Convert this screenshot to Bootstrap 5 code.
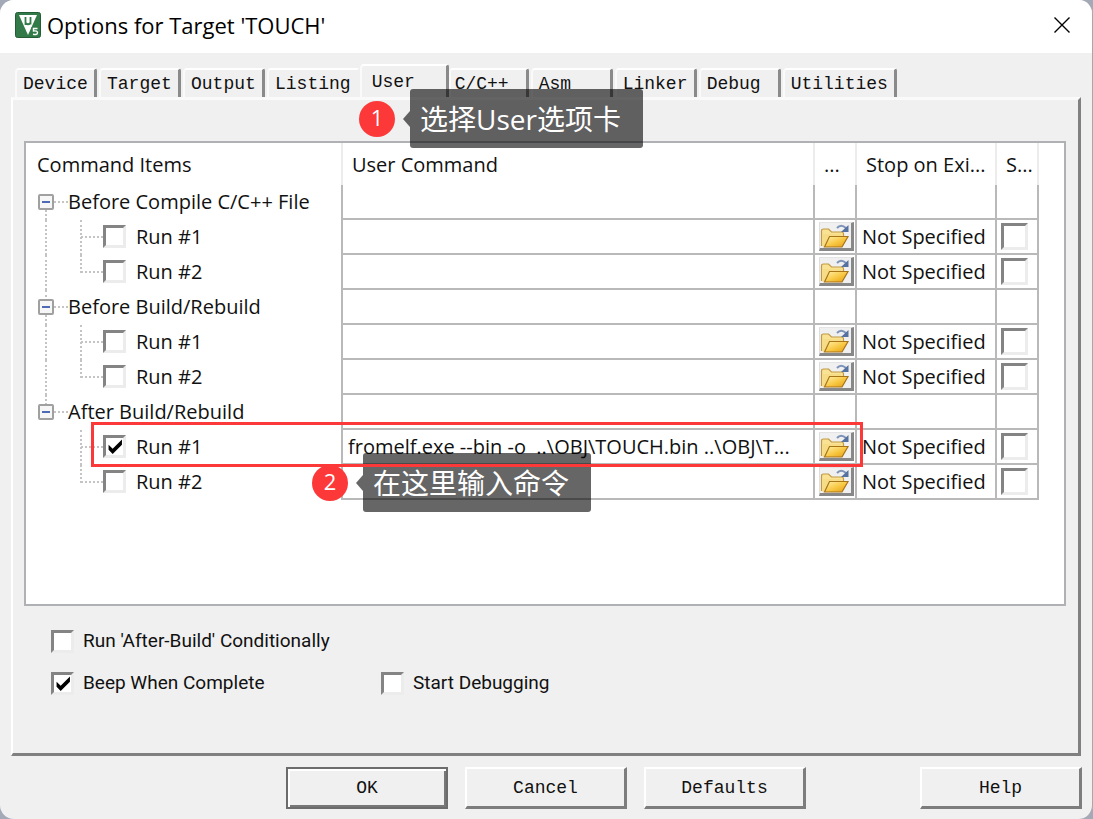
<!DOCTYPE html>
<html lang="en">
<head>
<meta charset="utf-8">
<meta name="viewport" content="width=device-width, initial-scale=1">
<title>Options for Target 'TOUCH'</title>
<link rel="stylesheet" href="https://cdn.jsdelivr.net/npm/bootstrap@5.3.0/dist/css/bootstrap.min.css">
<style>
  :root { --face: #f0f0f0; --grid: #b9b9b9; --red: #fc3838; }
  body { background: #a4a9b8; color: #111; font-family: "Open Sans", "Noto Sans CJK SC", sans-serif; font-size: 20px; line-height: 28px; }
  .dialog-win { background: var(--face); border-right: 1px solid #a8a8a8; border-radius: 14px; overflow: hidden; }
  .title-bar { background: #fff; height: 53px; padding: 0 20px 3px 15px; color: #000; }
  .title-bar h1 { font-size: 22px; line-height: 28px; padding-left: 6px; }
  .close-x { width: 20px; height: 20px; }
  .simsun, .tab-item { font-family: "Liberation Mono", monospace; font-size: 18px; line-height: 24px; color: #111; }

  .tab-strip { padding: 12px 0 0 15px; height: 44px; }
  .tab-item { height: 29px; min-width: 82px; margin-right: 2px; padding: 2px 6px; text-align: left; background: var(--face);
    border: 2px solid; border-color: #fff #8a8a8a transparent #fafafa; border-width: 2px 3px 0 2px; border-radius: 4px 3px 0 0; }
  .tab-item.wide-tab { min-width: 90px; border-right-color: transparent; margin-right: 0; }
  .tab-item.active { position: relative; z-index: 1; height: 33px; min-width: 89px; margin-right: 0; padding-left: 10px; }
  .tab-item.active + .tab-item { min-width: 80px; padding-left: 4px; }

  .tab-page { margin: 0 11px; padding: 41px 12px 0 11px; border: solid; border-width: 3px 3px 3px 2px; border-color: #fafafa #808080 #808080 #fff; }
  .list-box { background: #fff; border: 2px solid #b0b1b5; padding-right: 25px; }

  .cmd-table { table-layout: fixed; border-collapse: separate; border-spacing: 0; }
  .cmd-table th { height: 42px; padding: 2px 0 0 9px; font-weight: 400; border-right: 2px solid #ececec; white-space: nowrap; }
  .cmd-table th:first-child { padding-left: 11px; }
  .cmd-table td { height: 35px; padding: 0 0 0 5px; border-right: 2px solid var(--grid); border-bottom: 2px solid var(--grid); white-space: nowrap; }
  .cmd-table td:first-child { position: relative; padding: 0; border-bottom: 0; }
  .cmd-table td:last-child, .cmd-table td:nth-child(3) { padding-left: 4px; }
  .c-items { width: 317px; } .c-btn { width: 42px; } .c-stop { width: 140px; }

  .group-cell { padding: 0 0 2px 12px; height: 35px; }
  .twig { width: 14px; border-top: 2px dotted #c4c4c4; }
  .expander { position: relative; z-index: 1; width: 16px; height: 16px; padding: 0; border: 2px solid #a0a0a0; border-radius: 2px; background: #f6f6f6; }
  .expander::after { content: ""; display: block; height: 2px; margin: 0 2px; background: #4d6ab5; }
  .trunk::before { content: ""; position: absolute; left: 19px; top: 0; bottom: 0; border-left: 2px dotted #c4c4c4; }
  .trunk-first::before { top: 50%; }
  .trunk-last::before { bottom: 50%; }
  .run-cell { height: 35px; padding: 0 0 2px 55px; }
  .run-cell::before { content: ""; position: absolute; left: 54px; top: 0; bottom: 0; border-left: 2px dotted #c4c4c4; }
  .run-cell.last-run::before { bottom: 50%; }
  .run-cell .twig { width: 22px; }
  .run-cell label { padding-left: 10px; }

  .sunk { appearance: none; flex: none; width: 23px; height: 23px; margin: 0; background: #fff center / 18px 18px no-repeat; border: 3px solid; border-color: #848484 #ececec #ececec #848484; }
  .sunk:checked { background-image: url("data:image/svg+xml,%3Csvg xmlns='http://www.w3.org/2000/svg' viewBox='0 0 18 18'%3E%3Cpath d='M3 7v5l4 4 9-9V2L7 11z'/%3E%3C/svg%3E"); }
  .sunk-lg { width: 27px; height: 27px; display: block; }
  .cmd-input { border: 0; outline: 0; padding: 0; height: 28px; background: transparent; color: #111; display: block; }
  .browse { display: block; width: 35px; height: 29px; padding: 0; background: #f0f0f0; border: solid; border-width: 1px 3px 3px 1px; border-color: #e4e4e4 #888 #888 #ddd; }
  .browse svg { display: block; }

  .run-mark { position: absolute; left: 65px; right: 201px; top: 279px; height: 45px; border: 3px solid var(--red); z-index: 3; pointer-events: none; }
  .note { position: absolute; z-index: 2; color: #fff; }
  .note-user { left: 346px; top: -11px; }
  .note-cmd { left: 286px; top: 310px; }
  .note-num { width: 36px; height: 36px; border-radius: 50%; background: var(--red); font-size: 22px; padding-bottom: 3px; }
  .note-arrow { width: 0; height: 0; margin-left: 8px; border: solid transparent; border-width: 8px 7px 8px 0; border-right-color: rgba(0,0,0,.6); }
  .note-text { height: 59px; padding: 0 22px 0 10px; border-radius: 3px; background: rgba(0,0,0,.6); font-size: 28px; line-height: 60px; white-space: nowrap; }

  .options { height: 147px; padding: 21px 0 0 27px; font-family: "Roboto", sans-serif; font-size: 19px; }
  .options .opt-row { height: 28px; margin-bottom: 14px; }
  .options label { padding-left: 9px; }
  .opt-col { width: 330px; }

  .foot { padding: 11px 10px 10px; gap: 17px; }
  .push-btn { width: 162px; height: 42px; padding: 0; background: var(--face); border: solid; border-width: 2px 3px 3px 2px; border-color: #fff #7d7d7d #7d7d7d #fff; }
  .push-btn.is-default { border: 2px solid #6c6c6c; box-shadow: inset 2px 2px #fff, inset -2px -2px #777; }
  .help-gap { margin-left: 97px; }
</style>
</head>
<body>
<svg width="0" height="0" class="position-absolute" aria-hidden="true">
  <defs>
    <linearGradient id="gf" x1="0" y1="0" x2="1" y2="1"><stop offset="0" stop-color="#fff2ac"/><stop offset=".55" stop-color="#f8c640"/><stop offset="1" stop-color="#e39a12"/></linearGradient>
    <symbol id="folder" viewBox="0 0 31 25">
      <path d="M1.500 23V8q0-2 2-2h5l3 3h10q2 0 2 2v3" fill="#f9e294" stroke="#c29a45" stroke-width="1.200"/>
      <path d="M2 23V11h19v3H9L4 24z" fill="#f7dc88"/>
      <path d="M9.500 13.500H28L22 24H4.500z" fill="url(#gf)" stroke="#a87418" stroke-width="1.200"/>
      <path d="M17 5q4-4.500 9 0" fill="none" stroke="#7d93b8" stroke-width="2"/>
      <path d="M28.500 2v7H21z" fill="#54719f"/>
    </symbol>
  </defs>
</svg>

<main class="dialog-win min-vh-100 d-flex flex-column">
  <header class="title-bar d-flex align-items-center">
    <svg width="26" height="26" viewBox="0 0 26 26" aria-hidden="true">
      <rect x=".5" y=".5" width="25" height="25" rx="2" fill="#337a49" stroke="#235c35"/>
      <path d="M4 3h18L13 23z" fill="#fff"/>
      <path d="M10.500 5v8M10.500 11q2.500 2.500 5 0M15.500 5v7.500" fill="none" stroke="#337a49" stroke-width="1.800"/>
      <path d="M16.500 15h8v9h-8z" fill="#337a49"/>
      <path d="M22.500 16.500h-4v2.500q4-.5 4 1.800t-4.500 1.500" fill="none" stroke="#fff" stroke-width="1.400"/>
    </svg>
    <h1 class="m-0 fw-normal flex-grow-1">Options for Target 'TOUCH'</h1>
    <button type="button" class="close-x border-0 bg-transparent p-0 d-flex align-items-center justify-content-center" aria-label="Close">
      <svg width="16" height="16" viewBox="0 0 16 16"><path d="M.5.5l15 15M15.500.5l-15 15" stroke="#000" stroke-width="1.400"/></svg>
    </button>
  </header>

  <nav class="tab-strip d-flex align-items-end" role="tablist">
    <button class="tab-item" type="button" role="tab">Device</button>
    <button class="tab-item" type="button" role="tab">Target</button>
    <button class="tab-item" type="button" role="tab">Output</button>
    <button class="tab-item wide-tab" type="button" role="tab">Listing</button>
    <button class="tab-item active" type="button" role="tab" aria-selected="true">User</button>
    <button class="tab-item" type="button" role="tab">C/C++</button>
    <button class="tab-item" type="button" role="tab">Asm</button>
    <button class="tab-item" type="button" role="tab">Linker</button>
    <button class="tab-item" type="button" role="tab">Debug</button>
    <button class="tab-item" type="button" role="tab">Utilities</button>
  </nav>

  <section class="tab-page position-relative flex-grow-1 d-flex flex-column">
    <div class="note note-user d-flex align-items-center">
      <span class="note-num d-flex align-items-center justify-content-center">1</span>
      <span class="note-arrow"></span><span class="note-text">选择User选项卡</span>
    </div>

    <div class="list-box position-relative flex-grow-1">
      <table class="cmd-table w-100">
        <colgroup><col class="c-items"><col><col class="c-btn"><col class="c-stop"><col class="c-btn"></colgroup>
        <thead><tr><th>Command Items</th><th>User Command</th><th>...</th><th>Stop on Exi...</th><th>S...</th></tr></thead>
        <tbody id="rows"></tbody>
      </table>
      <div class="run-mark"></div>
      <div class="note note-cmd d-flex align-items-center">
        <span class="note-num d-flex align-items-center justify-content-center">2</span>
        <span class="note-arrow"></span><span class="note-text">在这里输入命令</span>
      </div>
    </div>

    <div class="options">
      <div class="opt-row d-flex align-items-center">
        <input class="sunk" type="checkbox" id="cond"><label for="cond">Run 'After-Build' Conditionally</label>
      </div>
      <div class="opt-row d-flex">
        <div class="opt-col d-flex align-items-center"><input class="sunk" type="checkbox" id="beep" checked><label for="beep">Beep When Complete</label></div>
        <div class="d-flex align-items-center"><input class="sunk" type="checkbox" id="dbg"><label for="dbg">Start Debugging</label></div>
      </div>
    </div>
  </section>

  <footer class="foot d-flex justify-content-end">
    <button type="button" class="push-btn simsun is-default">OK</button>
    <button type="button" class="push-btn simsun">Cancel</button>
    <button type="button" class="push-btn simsun">Defaults</button>
    <button type="button" class="push-btn simsun help-gap">Help</button>
  </footer>
</main>

<script src="https://cdn.jsdelivr.net/npm/bootstrap@5.3.0/dist/js/bootstrap.bundle.min.js"></script>
<script>
  const groups = ['Before Compile C/C++ File', 'Before Build/Rebuild', 'After Build/Rebuild'];
  const command = 'fromelf.exe --bin -o  ..\\OBJ\\TOUCH.bin ..\\OBJ\\T...';
  let html = '';
  groups.forEach((name, g) => {
    const trunk = g === 0 ? 'trunk trunk-first' : g === 2 ? 'trunk trunk-last' : 'trunk';
    html += `<tr><td class="${trunk}"><div class="group-cell d-flex align-items-center"><button type="button" class="expander" aria-label="Collapse ${name}"></button><span class="twig"></span><span>${name}</span></div></td><td></td><td></td><td></td><td></td></tr>`;
    [1, 2].forEach(n => {
      const on = g === 2 && n === 1, id = `run${g}${n}`;
      html += `<tr><td class="${g < 2 ? 'trunk' : ''}"><div class="run-cell ${n === 2 ? 'last-run' : ''} d-flex align-items-center"><span class="twig"></span><input class="sunk" type="checkbox" id="${id}" ${on ? 'checked' : ''}><label for="${id}">Run #${n}</label></div></td>
        <td><input class="cmd-input w-100" type="text" aria-label="${name} command ${n}" value="${on ? command : ''}"></td>
        <td><button type="button" class="browse" aria-label="Browse"><svg width="31" height="25"><use href="#folder"/></svg></button></td>
        <td>Not Specified</td>
        <td><input class="sunk sunk-lg" type="checkbox" aria-label="Spawn ${name} ${n}"></td></tr>`;
    });
  });
  document.getElementById('rows').innerHTML = html;
</script>
</body>
</html>
